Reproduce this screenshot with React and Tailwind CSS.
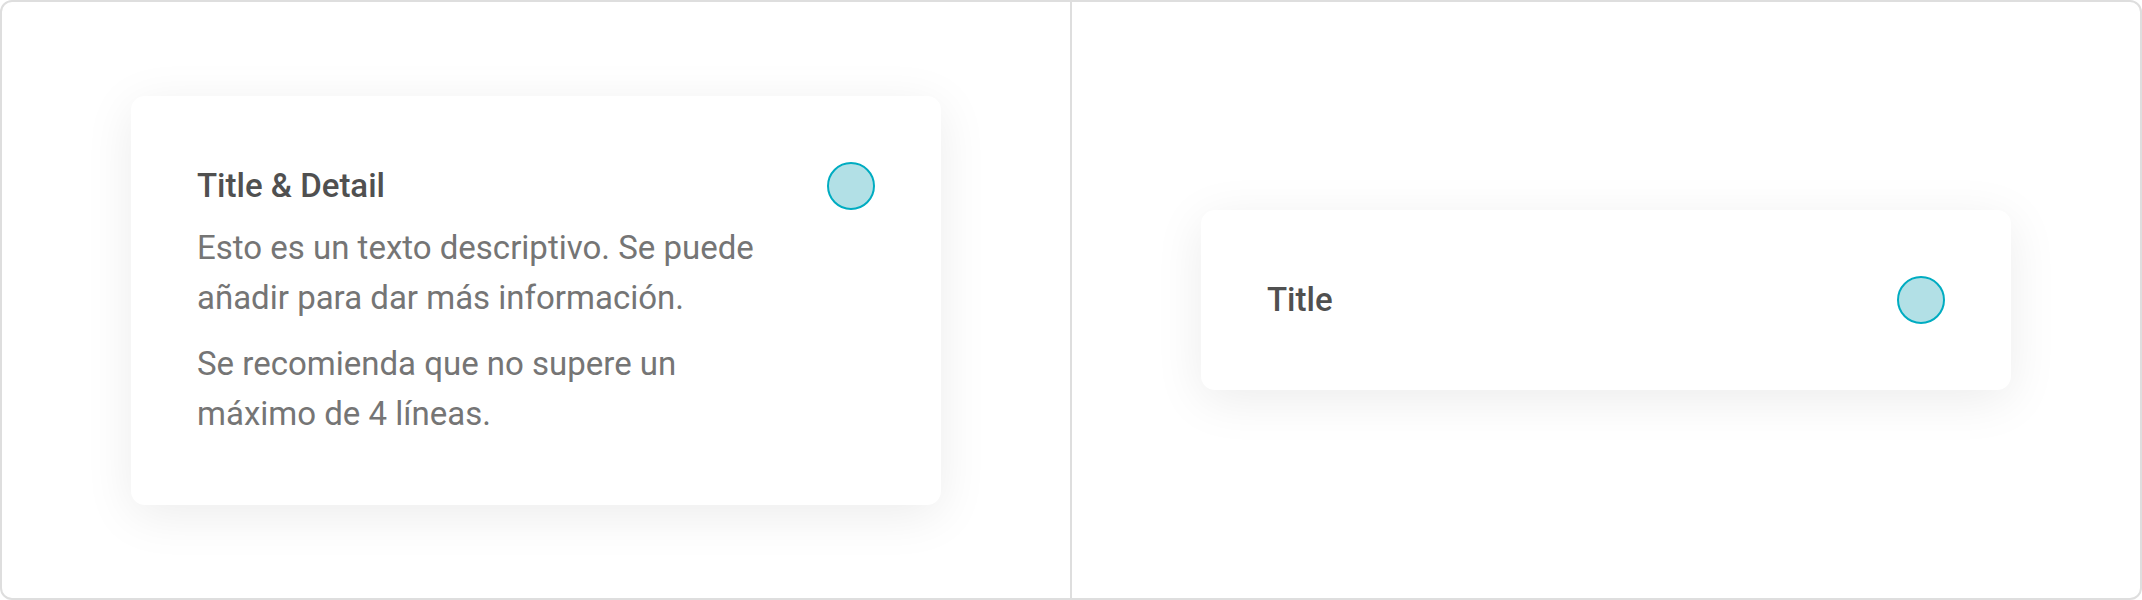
const Radio = () => (
  <div className="size-12 shrink-0 rounded-full border-2 border-[#00acc1] bg-[#b2e0e6]" />
);

const Card = ({ title, children }) => (
  <div className="w-[810px] rounded-[14px] bg-white p-[66px] shadow-[0_10px_50px_rgba(0,0,0,0.08)]">
    <div className="flex items-center justify-between h-12">
      <h2 className="text-[33px] leading-[40px] font-medium text-[#505050]">{title}</h2>
      <Radio />
    </div>
    {children}
  </div>
);

export default function App() {
  return (
    <div
      className="w-[2142px] h-[600px] flex bg-white border-2 border-[#dedede] rounded-[12px] overflow-hidden"
      style={{ fontFamily: "Roboto, 'Noto Sans', sans-serif" }}
    >
      {/* LEFT: title + detail */}
      <div className="flex-1 flex items-center justify-center border-r-2 border-[#dedede]">
        <Card title="Title & Detail">
          <div className="w-[575px] mt-[13px] flex flex-col gap-4 text-[33px] leading-[50px] text-[#757575]">
            <p>Esto es un texto descriptivo. Se puede añadir para dar más información.</p>
            <p>Se recomienda que no supere un máximo de 4 líneas.</p>
          </div>
        </Card>
      </div>

      {/* RIGHT: title only */}
      <div className="flex-1 flex items-center justify-center">
        <Card title="Title" />
      </div>
    </div>
  );
}
